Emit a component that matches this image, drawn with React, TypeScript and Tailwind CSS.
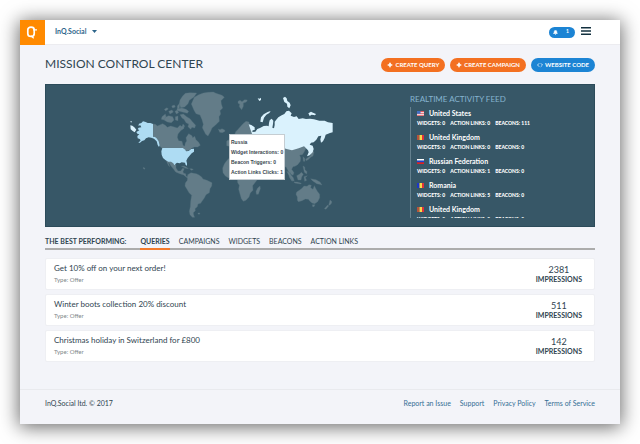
import { useState } from "react";
import { Bell, Code, Plus } from "lucide-react";

const LAND = [
  // canada and the arctic islands
  "M98 120l8 1 6 5 16-7 8 5 6 6 10-4 8 2 12 4 8-8 6 4 3-8 5 6-4 8-8 6-8 10-2 10 4 10 10 2 3 12 5 3 2-10 4-6-2-10 8-12 10 6 2 6 6-4 4 10 8 8 5 9-8 5-10 0-8 4-5 5-9 3-7-4-10-4H127l-6-4-4-14-7-12-12-6z",
  "M178 58l2-10 8-12 8-8 14-2 20 1-8 12-14 10-4 10-10 10-12 2z",
  "M180 92l10-2 10 8 10 6 6 8 11 12-3 8-8-2-4 6-8-8 2-8-8-4-6-10-6-4z",
  "M136 100l10-5 12 3 4 10-8 8-12-2-10-6zM126 98l10-8 2 8-6 10-8-2z",
  "M133 76l8-5 4 4-8 6zM146 82l10-4 4 6-10 6zM155 66l8-3 3 6-8 3zM165 82l7-4 4 8-7 4zM172 66l8-10-2 16-6 6zM166 98l8-2 0 14-8-2zM180 130l10-4 2 7-8 4z",
  "M172 74l14-2 12 4 8 6-4 6-12-3-12-3-8-3z",
  // greenland and iceland
  "M214 60l9-20 13-8 14-5 14-2 16-1 8 4 18 6 7 6-10 10 1 10 4 12-8 8 2 10-5 8 1 14-6 6-6 6-10 8-4 10-8 14-7-5-5-10-5-10 3-10-4-14-6-14-12-4-6-10z",
  "M295 135l5 2 6-3 8 4 1 4-8 4-8-1z",
  // mexico and the caribbean
  "M140 227l10 5 10 2 8 8 0 10 6 9 8 0 6-8 5 1-4 9 2 5 6 1 1 8 9 2 4 5-10-3-10-8-12-4-12-5-6-8-8-10-6-10-2 0 4 12-4-4-6-14z",
  "M184 247l8-1 10 5 3 3-8-1-8-4zM209 254l7 0 4 3-6 2z",
  // south america
  "M203 272l10-6 8 2 8 1 8 4 8 6 4 6 12 4 15 7-1 10-5 8-2 12-10 6-5 10-7 10-4 6-8 2-2 8-7 6 1 6-6 6 1 7 3 7-7 0-7-8-2-10 3-14 1-16 3-18-8-8-6-10-6-10 1-9 6-8z",
  "M234 387l6 0-2 4-4-1zM70 250l5 3-1 3-4-2z",
  // europe and asia
  "M344 152l3-9 6-6 8-9 8-9 9-7 9 2 1 8 8 10 0 16 100 40 18 4 18-6 18-1 8 8-6 12-5 7-8 1 3 9-1 10-8 10-8 5-6 1-4 8 7 10-3 8-6-3-4-7 4 14 6 12-3 2-8-12-3-18-7-14-12 6-5 14-4 8-6-10-5-14-40-18-60-4-30-16 8-20 4-8 8-2-4-18z",
  "M320 172l5-5 4 8-1 12-8-2zM354 52l6-3 6 4 8-6 8 1-3 6-9 3 0 10-5 10-7-9 1-8-5-2z",
  // africa
  "M328 222l-8 8-7 10-5 12 1 14 7 10 10 6 18-2 8 4 1 12 5 8-2 12 4 14 4 14 6 8 8-3 9-10 4-12 8-8-1-14 8-10 10-14-2-60-60-6z",
  "M413 312l7-6 1 8-6 17-6 0-1-9z",
  // south east asia, japan
  "M576 198l6 6-3 12-7 4-6 6-7 4-2-4 8-6 6-4 2-10zM549 218l5 5 1 9-5 0z",
  "M500 262l5 2 15 17 3 11-6-3-9-13zM522 294l10 0 12 4-2 2-18-3zM530 275l8-4 6-6 6 6-5 8-2 9-9 0zM552 278l10-3-6 6 4 8-6 3zM549 246l5 3 1 8 6 6-1 7-7-5-2-9zM572 284l8 2 8 1 12 7 6 9-8-2-8-2-6-4-6-4z",
  "M530 324l9-6 7-5 6-7 9 1 6-5 7 2-2 7 7 5 4-11 5 10 5 8 6 8 0 10-6 12-9 6-8-2-7-6-4-5-9-1-10 5-11 3-3-4 0-10-4-8zM577 362l8 0-3 6-4 0z",
  "M630 348l5 4 0 5-5 6-4 1 2-8zM623 363l3 3-8 10-5-2z",
];

const RUSSIA = [
  "M386 121l8 2 10 7 0 8-6 1-1 5 9-1 6-8 8-3 11-6 10-1 5 2 1-10 2-8 6-5 5 6-1 10-2 11 5 2 2-10 0-10 6-7 5-6 10-6 8-4 6-8 8-2 8 8-3 7 10 4 8-2 6 8 12-2 10 2 12-1 12 2 16 4 16 0 10 5 14 2v28l-8 2-13 5-3 10-5 10-6 4-2-10 3-11-9 2-6 10-8 8-8 1-4 6 9 3 3 10-3 10-9 9-8 3 5-12-2-6-12-12-16 6-20 6-16-4-100-34z",
  "M421 113l2-13 8-9 12-7 9-3-4 6-9 5-7 9-4 14z",
  "M489 42l6-4 5 5 2 8 7 5 3 8-4 9-6-5-1-9-8-5zM413 43l6 1 4-3 0 7-5 3zM565 88l8-5 6 3 9 4-3 4-10-2-6 4z",
  "M31 124l6 1 6 5 6 7-5 8-6-4-6-5zM31 112l4 0 1 3-4 0z",
];

const UNITED_STATES = [
  "M57 119l7-2 5-5 8 2 6 3 8 0 8 3v38l6 1 5 4 6 9 3 12-2 5-4-6-3-11-8-8-8-3-8-1-8 3-5 6-7 2-6 5-5 1 7-8-3-4-6-2-1-7 6-5-6-2-3-5 9-5-5-4 3-4 8-1-3-6-6 1z",
  "M127 192h61l8 5 2 5 8-1 8-6 8-1 0 9-7 5-5 6-7 8-4 8 2 8 0 7-4-2-2-7-10-1-6 3-8-2-5 4-3 4-3-6-7-5-8 0-9-5-7-6-4-10-1-10z",
];

const TOOLTIP = [
  "Russia",
  "Widget Interactions: 0",
  "Beacon Triggers: 0",
  "Action Links Clicks: 1",
];

type Flag = "us" | "mixed" | "ru" | "ro";

const FEED: { flag: Flag; country: string; links: number; beacons: number }[] = [
  { flag: "us", country: "United States", links: 0, beacons: 111 },
  { flag: "mixed", country: "United Kingdom", links: 0, beacons: 0 },
  { flag: "ru", country: "Russian Federation", links: 1, beacons: 0 },
  { flag: "ro", country: "Romania", links: 5, beacons: 0 },
  { flag: "mixed", country: "United Kingdom", links: 0, beacons: 0 },
];

const TABS = ["Queries", "Campaigns", "Widgets", "Beacons", "Action links"];

const OFFERS = [
  { title: "Get 10% off on your next order!", impressions: 2381 },
  { title: "Winter boots collection 20% discount", impressions: 511 },
  { title: "Christmas holiday in Switzerland for £800", impressions: 142 },
];

const LINKS = ["Report an Issue", "Support", "Privacy Policy", "Terms of Service"];

function Logo() {
  return (
    <svg viewBox="0 0 25 25" className="size-full" fill="none" stroke="#fff">
      <path
        d="M11 7.200c2 0 3.200 1 3.200 2.600v3.900c0 1.600-1.200 2.700-3.200 2.700s-3.200-1.100-3.200-2.700V9.800C7.800 8.200 9 7.200 11 7.200z"
        strokeWidth="1.700"
      />
      <path d="M13 9.800h4M11 16l2.800 2.200" strokeWidth="1.200" />
    </svg>
  );
}

function FlagIcon({ flag }: { flag: Flag }) {
  return (
    <svg viewBox="0 0 14 9" className="h-[5px] w-[7px] shrink-0" preserveAspectRatio="none">
      {flag === "us" && (
        <>
          <path fill="#f3d5d8" d="M0 0h14v9H0z" />
          <path fill="#e0575f" d="M0 0h14v2H0zM0 4h14v1.500H0zM0 7.500h14V9H0z" />
          <path fill="#3f6fc4" d="M0 0h7v5H0z" />
        </>
      )}
      {flag === "ru" && (
        <>
          <path fill="#fff" d="M0 0h14v3H0z" />
          <path fill="#1c3fd6" d="M0 3h14v3H0z" />
          <path fill="#e02020" d="M0 6h14v3H0z" />
        </>
      )}
      {(flag === "ro" || flag === "mixed") && (
        <>
          <path fill={flag === "ro" ? "#1b36c9" : "#b5533c"} d="M0 0h5v9H0z" />
          <path fill="#f7d94a" d="M5 0h5v9H5z" />
          <path fill="#e0323c" d="M10 0h4v9h-4z" />
        </>
      )}
    </svg>
  );
}

function WorldMap() {
  return (
    <div className="relative ml-[74px] w-[240px] shrink-0">
      <svg viewBox="0 3 720 423" className="block w-full" role="img" aria-label="World map">
        <g fill="#637c88" stroke="#567280" strokeWidth="1">
          {LAND.map((d) => (
            <path key={d} d={d} />
          ))}
        </g>
        <g fill="#aedcf3">
          {UNITED_STATES.map((d) => (
            <path key={d} d={d} />
          ))}
        </g>
        <g fill="#daf2fd">
          {RUSSIA.map((d) => (
            <path key={d} d={d} />
          ))}
        </g>
      </svg>
      <div className="absolute top-[49px] left-[109px] border border-[#c5cdd2] bg-white px-px py-[2px] font-['Liberation_Sans',Arial,sans-serif] text-[5px] leading-[10px] font-bold whitespace-nowrap text-[#39474f]">
        {TOOLTIP.map((line) => (
          <p key={line}>{line}</p>
        ))}
      </div>
    </div>
  );
}

function ActivityFeed() {
  return (
    <section className="w-[184px] shrink-0 pt-[9px]">
      <h2 className="text-[8px] leading-[10px] text-[#86b4cf] uppercase">
        Realtime activity feed
      </h2>
      <ul className="mt-[3px] h-[111px] overflow-y-auto border-l border-[#64808e] pl-[6px] text-white [scrollbar-width:none]">
        {FEED.map((item, i) => (
          <li key={i} className="h-6">
            <div className="flex items-center gap-[5px]">
              <FlagIcon flag={item.flag} />
              <span className="text-[7px] leading-[12px] font-bold">{item.country}</span>
            </div>
            <div className="flex gap-[5px] text-[5px] leading-[8px] font-black uppercase">
              <span>Widgets: 0</span>
              <span>Action links: {item.links}</span>
              <span>Beacons: {item.beacons}</span>
            </div>
          </li>
        ))}
      </ul>
    </section>
  );
}

export default function App() {
  const [tab, setTab] = useState("Queries");

  return (
    <div className="bg-white p-5 font-[Lato,sans-serif] text-[#2f4450]">
      <div className="bg-[#f3f4f9] shadow-[0_2px_18px_1px_rgba(0,0,0,0.6)]">
        <header className="flex h-[25px] items-center border-b border-[#ececf0] bg-white pr-[29px]">
          <a href="#" aria-label="Home" className="size-[25px] self-start bg-[#ff8a00]">
            <Logo />
          </a>
          <button className="ml-[10px] flex items-center gap-[6px] pb-[2px] text-[7px] leading-[10px] font-bold text-[#2d658a]">
            InQ.Social
            <svg viewBox="0 0 5 3" className="h-[3px] w-[5px]" fill="currentColor">
              <path d="M0 0h5L2.500 3z" />
            </svg>
          </button>
          <button className="ml-auto flex h-[11px] w-[26px] items-center justify-between rounded-full bg-[#1c84d4] pr-[6px] pl-1 text-[5px] font-bold text-white">
            <Bell className="size-[5px]" fill="currentColor" strokeWidth={3} />1
          </button>
          <button aria-label="Menu" className="ml-[6px] pb-[2px] text-[#12303f]">
            <svg viewBox="0 0 10 8" className="h-2 w-[10px]" fill="currentColor">
              <path d="M0 0h10v1.600H0zM0 3.200h10v1.600H0zM0 6.400h10V8H0z" />
            </svg>
          </button>
        </header>

        <main className="px-[25px]">
          <div className="flex h-[39px] items-center">
            <h1 className="pb-px text-[12px] leading-[16px] uppercase">Mission control center</h1>
            <div className="ml-auto flex gap-[5px] pt-px text-[6px] leading-[14px] font-bold text-white">
              <button className="flex h-[14px] items-center gap-[2px] rounded-full bg-[#f37021] px-[6px] uppercase">
                <Plus className="size-[6px]" strokeWidth={6} />
                Create query
              </button>
              <button className="flex h-[14px] items-center gap-[2px] rounded-full bg-[#f37021] px-[6px] uppercase">
                <Plus className="size-[6px]" strokeWidth={6} />
                Create campaign
              </button>
              <button className="flex h-[14px] items-center gap-[2px] rounded-full bg-[#1c84d4] px-[6px] uppercase">
                <Code className="size-[6px]" strokeWidth={3} />
                Website code
              </button>
            </div>
          </div>

          <div className="flex h-[143px] justify-between border border-[#2c4b5a] bg-[#375767]">
            <WorldMap />
            <ActivityFeed />
          </div>

          <div className="mt-2 flex items-stretch border-b-2 border-[#acacac] text-[7px] leading-[13px]">
            <h2 className="mr-[14px] font-bold uppercase">The best performing:</h2>
            <div role="tablist" className="flex gap-[9px]">
              {TABS.map((name) => (
                <button
                  key={name}
                  role="tab"
                  aria-selected={tab === name}
                  onClick={() => setTab(name)}
                  className={
                    tab === name
                      ? "-mb-[2px] border-b-2 border-[#f37b2c] font-bold uppercase"
                      : "uppercase"
                  }
                >
                  {name}
                </button>
              ))}
            </div>
          </div>

          <ul className="mt-2 space-y-1">
            {OFFERS.map((offer) => (
              <li
                key={offer.title}
                className="flex h-8 items-center justify-between rounded-xs border border-[#eeeff3] bg-white pr-3 pl-2"
              >
                <div className="pb-[2px]">
                  <h3 className="text-[8px] leading-[11px]">{offer.title}</h3>
                  <p className="mt-[2px] text-[6px] leading-[8px] text-[#7d8488]">Type: Offer</p>
                </div>
                <div className="text-center">
                  <div className="text-[9px] leading-[10px]">{offer.impressions}</div>
                  <div className="text-[7px] leading-[8px] font-bold uppercase">Impressions</div>
                </div>
              </li>
            ))}
          </ul>
        </main>

        <footer className="mt-[27px] flex h-[35px] items-center justify-between border-t border-[#e9eaee] px-[25px] pb-[7px] text-[7px]">
          <p>InQ.Social ltd. © 2017</p>
          <nav className="flex gap-[9px] text-[#336e95]">
            {LINKS.map((link) => (
              <a key={link} href="#">
                {link}
              </a>
            ))}
          </nav>
        </footer>
      </div>
    </div>
  );
}
